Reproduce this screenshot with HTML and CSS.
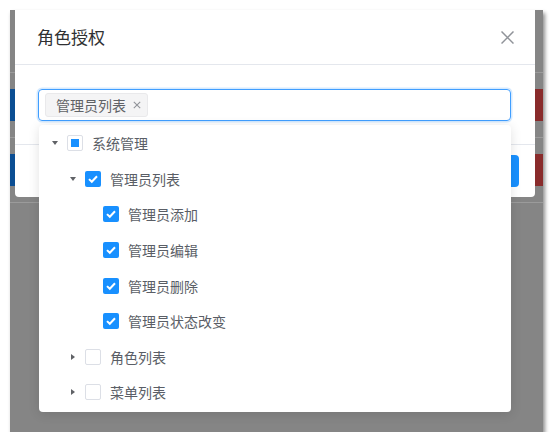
FILE: index.html
```html
<!DOCTYPE html>
<html lang="zh-CN">
<head>
<meta charset="utf-8">
<title>角色授权</title>
<link rel="stylesheet" href="styles.css">
</head>
<body>
<div class="frame">
  <div class="bg">
    <div class="bg-head"></div>
    <div class="bg-row"><span class="bg-blue"></span><span class="bg-red"></span></div>
    <div class="bg-row"><span class="bg-blue"></span><span class="bg-red"></span></div>
  </div>

  <div class="dialog">
    <div class="dialog-header">
      <span class="dialog-title">角色授权</span>
      <svg class="close" width="13" height="13" viewBox="0 0 13 13"><path d="M0.5 0.5 L12.5 12.5 M12.5 0.5 L0.5 12.5" stroke="#909399" stroke-width="1.5" fill="none"/></svg>
    </div>
    <div class="dialog-body">
      <div class="select">
        <span class="tag">管理员列表<svg class="tag-x" width="8" height="8" viewBox="0 0 8 8"><path d="M0.8 0.8 L7.2 7.2 M7.2 0.8 L0.8 7.2" stroke="#909399" stroke-width="1.1" fill="none"/></svg></span>
      </div>
    </div>
    <div class="dialog-footer">
      <span class="btn-primary"></span>
    </div>
  </div>

  <div class="dropdown">
    <div class="node lv0"><span class="caret"><i class="tri-down"></i></span><span class="cb cb-half"><i></i></span><span class="label">系统管理</span></div>
    <div class="node lv1"><span class="caret"><i class="tri-down"></i></span><span class="cb cb-on"><svg width="16" height="16" viewBox="0 0 16 16"><path d="M4 8.1 L6.8 10.8 L12 5.2" stroke="#fff" stroke-width="2" fill="none"/></svg></span><span class="label">管理员列表</span></div>
    <div class="node lv2"><span class="caret"></span><span class="cb cb-on"><svg width="16" height="16" viewBox="0 0 16 16"><path d="M4 8.1 L6.8 10.8 L12 5.2" stroke="#fff" stroke-width="2" fill="none"/></svg></span><span class="label">管理员添加</span></div>
    <div class="node lv2"><span class="caret"></span><span class="cb cb-on"><svg width="16" height="16" viewBox="0 0 16 16"><path d="M4 8.1 L6.8 10.8 L12 5.2" stroke="#fff" stroke-width="2" fill="none"/></svg></span><span class="label">管理员编辑</span></div>
    <div class="node lv2"><span class="caret"></span><span class="cb cb-on"><svg width="16" height="16" viewBox="0 0 16 16"><path d="M4 8.1 L6.8 10.8 L12 5.2" stroke="#fff" stroke-width="2" fill="none"/></svg></span><span class="label">管理员删除</span></div>
    <div class="node lv2"><span class="caret"></span><span class="cb cb-on"><svg width="16" height="16" viewBox="0 0 16 16"><path d="M4 8.1 L6.8 10.8 L12 5.2" stroke="#fff" stroke-width="2" fill="none"/></svg></span><span class="label">管理员状态改变</span></div>
    <div class="node lv1"><span class="caret"><i class="tri-right"></i></span><span class="cb"></span><span class="label">角色列表</span></div>
    <div class="node lv1"><span class="caret"><i class="tri-right"></i></span><span class="cb"></span><span class="label">菜单列表</span></div>
  </div>
</div>
</body>
</html>
```

FILE: styles.css
```css
html, body {
  margin: 0;
  padding: 0;
  background: #ffffff;
  font-family: "Noto Sans CJK SC", "Noto Sans", sans-serif;
}

.frame {
  position: relative;
  margin: 10px 0 0 10px;
  width: 533px;
  height: 422px;
  background: #858585;
  box-shadow: 2px 3px 4px rgba(0, 0, 0, 0.45);
  overflow: hidden;
}

.bg-head {
  height: 62px;
  border-bottom: 1px solid #9b9b9b;
}

.bg-row {
  height: 64px;
  border-bottom: 1px solid #9b9b9b;
  display: flex;
  justify-content: space-between;
  align-items: center;
}

.bg-blue {
  width: 5px;
  height: 32px;
  background: #0b4e93;
}

.bg-red {
  width: 8px;
  height: 32px;
  background: #892b2b;
}

.dialog {
  position: absolute;
  left: 5px;
  top: 0;
  width: 520px;
  height: 187px;
  background: #ffffff;
  border-radius: 0 0 4px 4px;
  display: flex;
  flex-direction: column;
}

.dialog-header {
  height: 54px;
  border-bottom: 1px solid #e4e7ed;
  display: flex;
  align-items: center;
  justify-content: space-between;
  padding: 0 21px 0 22px;
}

.dialog-title {
  font-size: 17px;
  color: #303133;
  line-height: 24px;
}

.close {
  display: block;
  margin-top: 1px;
}

.dialog-body {
  padding: 24px 24px 23px 23px;
  border-bottom: 1px solid #e4e7ed;
}

.select {
  height: 30px;
  border: 1px solid #409eff;
  border-radius: 4px;
  box-shadow: 0 0 0 1.5px rgba(64, 158, 255, 0.22);
  display: flex;
  align-items: center;
  padding-left: 6px;
}

.tag {
  height: 22px;
  border: 1px solid #e9e9eb;
  background: #f4f4f5;
  border-radius: 3px;
  padding: 0 6px 0 10px;
  display: flex;
  align-items: center;
  font-size: 14px;
  color: #606266;
  line-height: 22px;
}

.tag-x {
  display: block;
  margin-left: 7px;
}

.dialog-footer {
  flex: 1;
  display: flex;
  justify-content: flex-end;
  align-items: flex-start;
  padding: 10px 16px 0 0;
}

.btn-primary {
  width: 80px;
  height: 32px;
  background: #1890ff;
  border-radius: 4px;
}

.dropdown {
  position: absolute;
  left: 29px;
  top: 115px;
  width: 472px;
  height: 287px;
  box-sizing: border-box;
  padding-top: 0.5px;
  background: #ffffff;
  border-radius: 4px;
  box-shadow: 0 2px 12px rgba(0, 0, 0, 0.12);
}

.node {
  height: 35.6px;
  display: flex;
  align-items: center;
  font-size: 14px;
  color: #5a5e66;
}

.lv0 { padding-left: 4px; }
.lv1 { padding-left: 22px; }
.lv2 { padding-left: 40px; }

.caret {
  width: 24px;
  height: 16px;
  display: flex;
  align-items: center;
  justify-content: center;
  flex: none;
}

.tri-down {
  width: 0;
  height: 0;
  border-left: 3.5px solid transparent;
  border-right: 3.5px solid transparent;
  border-top: 4px solid #606266;
}

.tri-right {
  width: 0;
  height: 0;
  border-top: 3.5px solid transparent;
  border-bottom: 3.5px solid transparent;
  border-left: 4px solid #606266;
}

.cb {
  width: 16px;
  height: 16px;
  box-sizing: border-box;
  border: 1px solid #dcdfe6;
  border-radius: 2px;
  background: #ffffff;
  flex: none;
  display: flex;
  align-items: center;
  justify-content: center;
  margin-right: 9px;
}

.cb-on {
  border: none;
  background: #1890ff;
}

.cb-on svg {
  display: block;
}

.cb-half i {
  width: 8px;
  height: 8px;
  background: #1890ff;
  display: block;
}

.label {
  line-height: 20px;
}
```
